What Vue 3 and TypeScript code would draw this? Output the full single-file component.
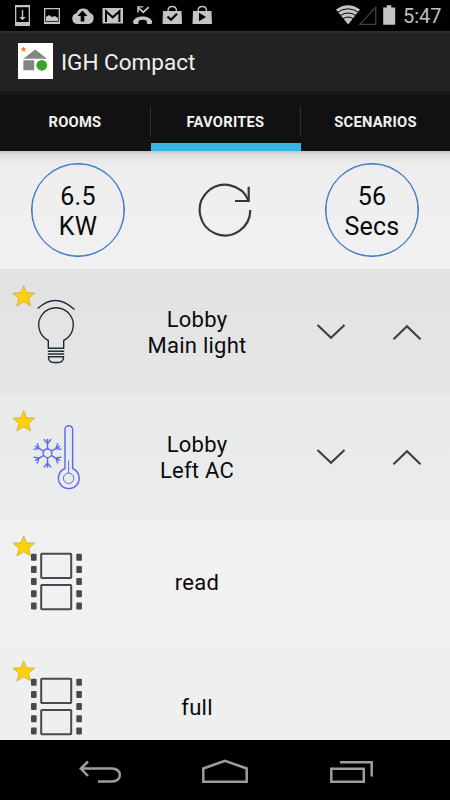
<script setup lang="ts">
import { ref } from 'vue'

type IconName = 'bulb' | 'climate' | 'film'

interface Favorite {
  lines: string[]
  icon: IconName
  adjustable: boolean
}

const tabs: string[] = ['ROOMS', 'FAVORITES', 'SCENARIOS']
const activeTab = ref<number>(1)

const favorites: Favorite[] = [
  { lines: ['Lobby', 'Main light'], icon: 'bulb', adjustable: true },
  { lines: ['Lobby', 'Left AC'], icon: 'climate', adjustable: true },
  { lines: ['read'], icon: 'film', adjustable: false },
  { lines: ['full'], icon: 'film', adjustable: false },
]

const perforations: number[] = [34.8, 47, 59.1, 71.3, 83.5]
const arms: number[] = [0, 60, 120, 180, 240, 300]
</script>

<template>
  <div class="screen">
    <header class="status">
      <svg class="status-icons" width="225" height="30" viewBox="0 0 225 30">
        <g fill="#c4c4c4">
          <path fill-rule="evenodd" d="M15 5h15v21H15zM16.300 7.300v14.700h12.400v-14.700z" />
          <path d="M21.800 10h1.400v7h2.600l-3.300 3.300-3.300-3.300h2.600z" />
          <path fill-rule="evenodd" d="M44 8h16v16H44zM45.300 9.300v12.500h13.400v-12.500z" />
          <path d="M46 21v-4l3-2 3 2 3-1 3 2v3z" />
          <path fill-rule="evenodd" d="M77 24a5.500 5.500 0 0 1-.5-10.800A7.200 7.200 0 0 1 89.800 12.800A5.800 5.800 0 0 1 88.500 24zM82.500 10.500l-5 5.500h3.200v5.500h3.600V16h3.200z" />
          <path d="M102.500 8h20.500v15.500h-20.500z" />
          <path d="M139.300 7.500l3.900 3.600 5-4.600 1.200 1.300-6.200 5.700-4.500-4.200v3.300h-1.500V6.200h6v1.300z" />
          <path d="M133 21.700c2-7 17.200-7 19.300 0l-.8 2.300h-4.300l-.7-3.500q-3.800-1.300-7.600 0l-.7 3.500h-4.400z" />
          <path d="M163 11h18.500l.5 13h-19.500z" />
          <path d="M193 11h18.500l.5 13h-19.500z" />
        </g>
        <path d="M106 22V11.300l6.700 6 6.700-6V22" fill="none" stroke="#000" stroke-width="2" />
        <g fill="none" stroke="#c4c4c4" stroke-width="1.300">
          <path d="M168 11c0-6 8.500-6 8.500 0M198 11c0-6 8.500-6 8.500 0" />
        </g>
        <path d="M167.500 16.500l3.500 3.300 6-6" fill="none" stroke="#000" stroke-width="2.200" />
        <path d="M199 12.800v8.500l7-4.200z" fill="#000" />
      </svg>
      <div class="status-right">
        <svg width="64" height="30" viewBox="0 0 64 30">
          <path d="M1 9.500Q13 1 25 9.500L13.200 24.500z" fill="#c4c4c4" />
          <g fill="none" stroke="#000" stroke-width="1">
            <path d="M2.500 12.300q10.500-7 21 0M5.200 15.500q8-5 15.800 0M7.800 18.700q5.400-3.300 10.700 0" />
          </g>
          <path d="M24.700 24.300L40.700 7.300v17z" fill="none" stroke="#424242" stroke-width="1.200" />
          <path d="M48.200 7.500h3.600V5.200h4.500v2.300h3.900v17.200H48.200z" fill="#c4c4c4" />
        </svg>
        <span class="clock">5:47</span>
      </div>
    </header>

    <div class="action-bar">
      <svg class="logo" width="35" height="36" viewBox="0 0 35 36">
        <path d="M0 0h35v36H0z" fill="#fff" />
        <path d="M5.500 3.300l.8 1.900 2.100.1-1.600 1.400.6 2.200-1.900-1.200-1.900 1.200.6-2.200-1.600-1.400 2.100-.1z" fill="#f08028" />
        <path d="M17.200 6.500l11.800 9.300H5.400zM5.400 17.300h10.800v10H5.400z" fill="#858585" />
        <circle cx="23.800" cy="22.300" r="5.400" fill="#39a527" />
      </svg>
      <h1>IGH Compact</h1>
    </div>

    <nav class="tabs">
      <button
        v-for="(tab, index) in tabs"
        :key="tab"
        class="tab"
        :class="{ active: index === activeTab }"
        @click="activeTab = index"
      >
        {{ tab }}
      </button>
    </nav>

    <section class="summary">
      <div class="gauge">6.5<br />KW</div>
      <svg class="refresh" width="56" height="56" viewBox="0 0 56 56" fill="none" stroke="#383838" stroke-width="2.200">
        <path d="M53.300 28A25.300 25.300 0 1 1 51.500 18.700" />
        <path d="M51.700 4.700V19H38" />
      </svg>
      <div class="gauge">56<br />Secs</div>
    </section>

    <main class="list">
      <article v-for="(item, index) in favorites" :key="index" class="row">
        <svg class="icon" width="104" height="125" viewBox="0 0 104 125" fill="none">
          <g v-if="item.icon === 'bulb'" stroke="#222b38" stroke-width="1.400">
            <path d="M37.700 39.500Q55.500 22.800 74.500 40.500" />
            <path d="M48.300 79.300V71.500A17.300 17.300 0 1 1 63.700 71.500v7.800z" />
            <path d="M47.800 82.200h16.400M47.800 85h16.400" />
            <path d="M48.500 87.700h15v1.500q-.8 4.300-5 4.300h-5q-4.200 0-5-4.300z" />
          </g>
          <g v-else-if="item.icon === 'climate'" stroke="#5968f2" stroke-width="1.400">
            <circle cx="47.500" cy="59.300" r="4.300" />
            <path
              v-for="angle in arms"
              :key="angle"
              d="M47.500 55V44.800M43.900 45.300l3.600 4.300 3.600-4.300"
              :transform="`rotate(${angle} 47.500 59.300)`"
            />
            <path d="M65 74.500V35.500a3.800 3.800 0 0 1 7.600 0v39a10.400 10.400 0 1 1-7.600 0z" />
            <circle cx="68.600" cy="84.300" r="5.200" stroke-width="1" />
            <path d="M68.600 66.500V79" stroke-width="1" />
          </g>
          <g v-else>
            <rect x="41.200" y="34.700" width="30" height="24.300" rx=".8" stroke="#48494d" stroke-width="2" />
            <rect x="41.200" y="66" width="30" height="24.300" rx=".8" stroke="#48494d" stroke-width="2" />
            <g v-for="y in perforations" :key="y" fill="#48494d">
              <rect x="31" :y="y" width="5.600" height="7" rx="1" />
              <rect x="76.300" :y="y" width="5.600" height="7" rx="1" />
            </g>
          </g>
          <path
            d="M23.700 16.700l2.800 7.100 8.200.3-6.100 5.200 2 7.500-6.900-4-6.800 4.200 2-7.700-6-5.200 8-.3z"
            fill="#ffd00c"
            stroke="#caa42c"
            stroke-width=".7"
          />
        </svg>
        <div class="label">
          <span v-for="line in item.lines" :key="line">{{ line }}</span>
        </div>
        <div v-if="item.adjustable" class="controls">
          <svg width="30" height="18" viewBox="0 0 30 18">
            <path d="M1.500 2l13.500 12.700L28.500 2" />
          </svg>
          <svg width="30" height="18" viewBox="0 0 30 18">
            <path d="M1.500 16.300L15 3.300l13.500 13" />
          </svg>
        </div>
      </article>
    </main>

    <footer class="navbar">
      <svg width="450" height="60" viewBox="0 0 450 60" fill="none" stroke="#9d9d9d" stroke-width="2.500">
        <path d="M88 21.500l-7.200 7 7.200 7.500M81.500 28.500H112c10.500 0 10.500 13 0 13H98" />
        <path d="M203.300 41.700V28.500L225 20.800l21.700 7.700v13.200z" />
        <path d="M331.300 28.700h32.500v13h-32.500zM340 22.200h31.700v14.300" />
      </svg>
    </footer>
  </div>
</template>

<style>
body {
  margin: 0;
  background: #000;
}
</style>

<style scoped>
.screen {
  width: 450px;
  height: 800px;
  display: flex;
  flex-direction: column;
  overflow: hidden;
  background: #000;
  font-family: Roboto, sans-serif;
  color: #0a0a0a;
}

.screen svg {
  display: block;
  flex: none;
}

.status {
  height: 31px;
  flex: none;
  display: flex;
  justify-content: space-between;
}

.status-right {
  display: flex;
  width: 115px;
}

.clock {
  margin-left: 4px;
  padding-top: 1px;
  line-height: 31px;
  font-size: 20px;
  color: #c0c0c0;
}

.action-bar {
  box-sizing: border-box;
  height: 62px;
  flex: none;
  display: flex;
  align-items: center;
  gap: 8px;
  padding-left: 18px;
  padding-bottom: 2px;
  background: #222;
  border-top: 2px solid #2e2e2e;
  border-bottom: 2px solid #191919;
}

h1 {
  margin: 0;
  padding-top: 2px;
  font-size: 22.500px;
  font-weight: 400;
  color: #f1f1f1;
}

.tabs {
  height: 58px;
  flex: none;
  display: grid;
  grid-template-columns: 151px 150px 149px;
  background: linear-gradient(#1e1e1e 0 1px, #111 1px);
}

.tab {
  box-sizing: border-box;
  border: 0;
  border-bottom: 8px solid transparent;
  padding: 8px 1px 0 0;
  background: linear-gradient(#303030, #303030) right 13px / 1px 30px no-repeat;
  font: 700 14.700px Roboto, sans-serif;
  letter-spacing: .25px;
  color: #f2f2f2;
}

.tab:last-child {
  padding-right: 0;
  background: none;
}

.tab.active {
  border-bottom-color: #33b5e5;
}

.summary {
  box-sizing: border-box;
  height: 118px;
  flex: none;
  display: flex;
  align-items: center;
  justify-content: space-between;
  padding: 0 31px;
  background: linear-gradient(#c4c4c4, #e0e0e0 4px, #ebebeb 12px, #eee 20px, #f1f1f1);
}

.gauge {
  box-sizing: border-box;
  width: 94px;
  height: 94px;
  padding-top: 18px;
  border: 1px solid #2b6fc6;
  border-radius: 50%;
  box-shadow: inset 0 0 0 .5px #2b6fc6;
  text-align: center;
  font-size: 25px;
  line-height: 29.500px;
  letter-spacing: .2px;
}

.list {
  flex: 1;
  min-height: 0;
  overflow: hidden;
}

.row {
  height: 125px;
  display: flex;
  align-items: center;
  background: #f1f1f1;
}

.row:nth-child(1) {
  background: linear-gradient(#e2e2e2, #e6e6e6);
}

.row:nth-child(2) {
  background: linear-gradient(#e9ebea, #eaeceb);
}

.row:nth-child(4) {
  background: #eef0ef;
}

.label {
  width: 186px;
  padding-top: 2px;
  display: flex;
  flex-direction: column;
  align-items: center;
  font-size: 22px;
  line-height: 26px;
  letter-spacing: .25px;
}

.controls {
  display: flex;
  gap: 46px;
  margin-left: 26px;
}

.controls path {
  fill: none;
  stroke: #404040;
  stroke-width: 2.200;
}

.navbar {
  height: 60px;
  flex: none;
}
</style>
